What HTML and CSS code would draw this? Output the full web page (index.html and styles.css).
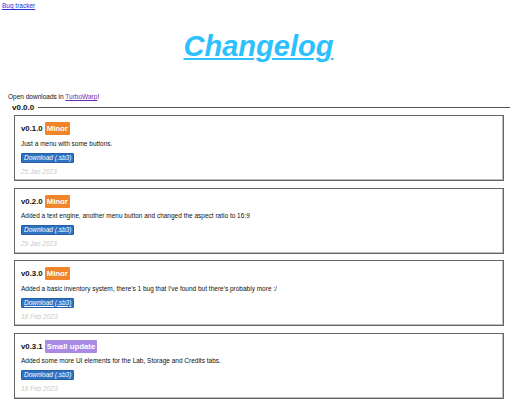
FILE: index.html
```html
<!DOCTYPE html>
<html>
<head>
<meta charset="utf-8">
<link rel="stylesheet" href="styles.css">
</head>
<body>
<div class="topbar"><a class="bug" href="#">Bug tracker</a></div>
<h1 class="title"><a href="#">Changelog</a></h1>
<p class="intro">Open downloads in <a class="visited" href="#">TurboWarp</a>!</p>
<section class="group">
  <div class="legend"><span class="legend-text">v0.0.0</span><span class="legend-line"></span></div>
  <div class="cards">
    <div class="card">
      <div class="card-title"><span class="ver">v0.1.0</span><span class="badge minor">Minor</span></div>
      <p class="desc">Just a menu with some buttons.</p>
      <a class="dl" href="#">Download (.sb3)</a>
      <p class="date">25 Jan 2023</p>
    </div>
    <div class="card">
      <div class="card-title"><span class="ver">v0.2.0</span><span class="badge minor">Minor</span></div>
      <p class="desc">Added a text engine, another menu button and changed the aspect ratio to 16:9</p>
      <a class="dl" href="#">Download (.sb3)</a>
      <p class="date">29 Jan 2023</p>
    </div>
    <div class="card">
      <div class="card-title"><span class="ver">v0.3.0</span><span class="badge minor">Minor</span></div>
      <p class="desc">Added a basic inventory system, there's 1 bug that I've found but there's probably more :/</p>
      <a class="dl hover" href="#">Download (.sb3)</a>
      <p class="date">18 Feb 2023</p>
    </div>
    <div class="card">
      <div class="card-title"><span class="ver">v0.3.1</span><span class="badge small">Small update</span></div>
      <p class="desc">Added some more UI elements for the Lab, Storage and Credits tabs.</p>
      <a class="dl" href="#">Download (.sb3)</a>
      <p class="date">19 Feb 2023</p>
    </div>
  </div>
</section>
</body>
</html>
```
FILE: styles.css
```css
html, body {
  margin: 0;
  padding: 0;
  background: #fff;
}
body {
  font-family: "Liberation Sans", Arial, sans-serif;
  font-size: 6.5px;
  color: #111;
  width: 512px;
  overflow: hidden;
}
.topbar {
  padding: 2px 0 0 2px;
  height: 10px;
  line-height: 8px;
}
.bug {
  color: #2233dd;
  text-decoration: underline;
}
.title {
  margin: 17px 0 0;
  padding-left: 5px;
  text-align: center;
  font-size: 29px;
  line-height: 34px;
  font-weight: bold;
  font-style: italic;
}
.title a {
  color: #2cc0ff;
  text-decoration: underline;
  text-decoration-thickness: 2px;
  text-underline-offset: 2px;
}
.intro {
  margin: 30px 0 0 8px;
  line-height: 8px;
}
.visited {
  color: #6a2fb0;
  text-decoration: underline;
}
.group {
  margin: 1.5px 2px 0 8px;
}
.legend {
  display: flex;
  align-items: center;
  height: 9px;
}
.legend-text {
  margin-left: 4px;
  font-size: 8px;
  font-weight: bold;
  padding-right: 4px;
}
.legend-line {
  flex: 1;
  height: 1px;
  background: #555;
}
.cards {
  margin: 3.5px 6px 0 6px;
  display: flex;
  flex-direction: column;
  gap: 6.5px;
}
.card {
  border: 1px solid #666;
  box-shadow: inset -1px -1px 0 #bbb;
  padding: 6px 6px 5px;
  height: 66px;
  box-sizing: border-box;
  display: flex;
  flex-direction: column;
  align-items: flex-start;
}
.card-title {
  display: flex;
  align-items: center;
  gap: 2px;
  height: 13px;
}
.ver {
  font-size: 7.8px;
  font-weight: bold;
}
.badge {
  color: #fff;
  font-weight: bold;
  font-size: 7.8px;
  line-height: 13px;
  padding: 0 2px;
  border-radius: 1px;
}
.minor { background: #f0852c; }
.small { background: #a98be6; }
.desc {
  margin: 4.5px 0 0;
  line-height: 8px;
}
.dl {
  margin-top: 5px;
  background: #2f72c2;
  border: 1px solid #245ea5;
  border-radius: 1px;
  color: #fff;
  font-style: italic;
  text-decoration: none;
  line-height: 8px;
  padding: 0 2px;
}
.dl.hover { text-decoration: underline; }
.date {
  margin: 5px 0 0;
  line-height: 8px;
  color: #c8c8c8;
  font-style: italic;
}
```
